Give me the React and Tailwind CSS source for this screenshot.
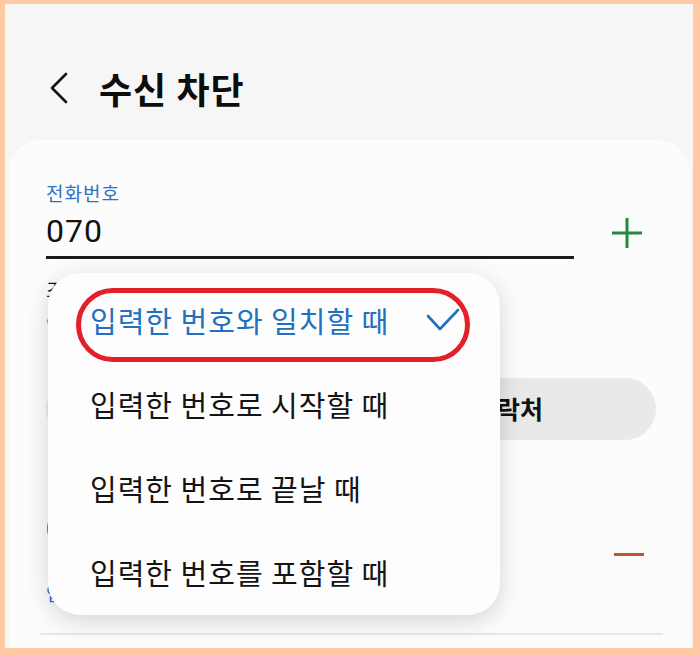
import React from 'react';

const KR = { fontFamily: '"Noto Sans CJK KR", "Noto Sans", sans-serif' };

const options = [
  '입력한 번호와 일치할 때',
  '입력한 번호로 시작할 때',
  '입력한 번호로 끝날 때',
  '입력한 번호를 포함할 때',
];

const App = () => {
  return (
    <div
      className="relative w-[700px] h-[655px] flex flex-col bg-[#f6f6f6] border-[#ffc8a2] border-l-[5px] border-t-[4px] border-r-[7px] border-b-[7px] overflow-hidden"
      style={KR}
    >
      {/* Header */}
      <div className="h-[136px] shrink-0 flex items-center pt-[32px] pl-[43px]">
        <svg width="20" height="32" viewBox="0 0 20 32" fill="none">
          <path d="M18 2 L4 16 L18 30" stroke="#111" strokeWidth="2.6" strokeLinecap="round" strokeLinejoin="round" />
        </svg>
        <h1 className="ml-[31px] text-[36px] leading-[44px] tracking-[1px] font-bold text-[#0d0d0d]">수신 차단</h1>
      </div>

      {/* Card */}
      <div className="flex-1 ml-[4px] mr-[3px] rounded-t-[32px] bg-[#fcfcfc] pl-[37px] pr-[34px] pt-[41px] flex flex-col">
        <span className="text-[19px] leading-[24px] tracking-[1px] text-[#2a74c2]">전화번호</span>

        <div className="flex items-end mt-[6px]">
          <div className="w-[528px] pb-[5px] border-b-[3px] border-[#1b1b1b]">
            <span className="block text-[32px] leading-[40px] tracking-[1px] text-[#111]" style={{ fontFamily: 'Roboto, sans-serif' }}>070</span>
          </div>
          <div className="ml-[35px] mb-[9px] w-[35px] h-[35px] flex items-center justify-center">
            <svg width="34" height="34" viewBox="0 0 34 34">
              <path d="M17 2 V32 M2 17 H32" stroke="#1d8a3d" strokeWidth="3" />
            </svg>
          </div>
        </div>

        <span className="mt-[19px] text-[20px] leading-[24px] text-[#111]">조건</span>
        <span className="mt-[10px] text-[18px] leading-[24px] text-[#2a74c2]">입력한 번호와 일치할 때</span>

        <div className="mt-[42px] flex gap-[20px]">
          <div className="flex-1 h-[62px] rounded-full bg-[#e9e9e9] flex items-center justify-center text-[25px] font-bold text-[#111]">최근 기록</div>
          <div className="flex-1 h-[62px] rounded-full bg-[#e9e9e9] flex items-center justify-center text-[25px] font-bold text-[#111]">연락처</div>
        </div>

        <div className="mt-[74px] flex items-center">
          <div className="flex-1 flex flex-col">
            <span className="text-[26px] leading-[30px] text-[#111]" style={{ fontFamily: 'Roboto, sans-serif' }}>070</span>
            <span className="mt-[37px] text-[18px] leading-[24px] text-[#2a74c2]">입력한 번호와 일치할 때</span>
          </div>
          <div className="w-[30px] h-[3px] bg-[#c4552b] mr-[12px] mb-[11px]" />
        </div>

        <div className="mt-[28px] -ml-[6px] -mr-[7px] h-[2px] bg-[#e6e6e6]" />
      </div>

      {/* Dropdown popup */}
      <div className="absolute left-[43px] top-[269px] w-[452px] h-[342px] rounded-[32px] bg-[#fdfdfd] shadow-[0_6px_24px_rgba(0,0,0,0.16)] pt-[5px] flex flex-col">
        {options.map((opt, i) => (
          <div key={opt} className="h-[84px] flex items-center pl-[42px] pr-[40px]">
            <span className={`text-[29px] leading-[36px] tracking-[1px] ${i === 0 ? 'text-[#2270c0]' : 'text-[#141414]'}`}>{opt}</span>
            {i === 0 && (
              <svg className="ml-auto" width="34" height="24" viewBox="0 0 34 24" fill="none">
                <path d="M2 8 L14 21 L32 2" stroke="#2270c0" strokeWidth="2.6" strokeLinecap="round" strokeLinejoin="round" />
              </svg>
            )}
          </div>
        ))}
      </div>

      {/* Red highlight annotation */}
      <div className="absolute left-[71px] top-[284px] w-[394px] h-[74px] rounded-full border-[5px] border-[#e3202a]" />
    </div>
  );
};

export default App;
